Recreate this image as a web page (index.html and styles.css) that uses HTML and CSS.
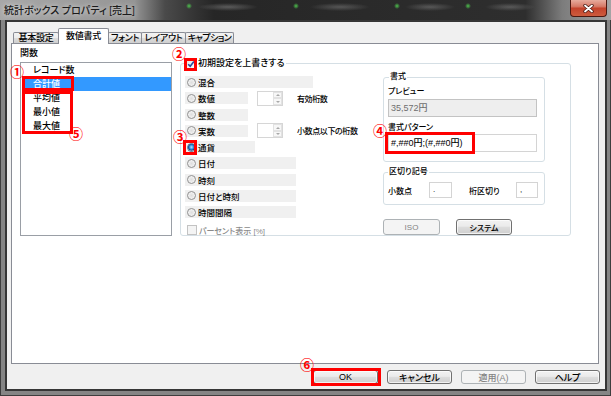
FILE: index.html
```html
<!DOCTYPE html>
<html lang="ja">
<head>
    <meta charset="UTF-8">
    <title>統計ボックス プロパティ</title>
    <link rel="stylesheet" href="styles.css">
</head>
<body>
    <div class="window">
        <!-- タイトルバー -->
        <div class="titlebar">
            <span class="title">統計ボックス プロパティ [売上]</span>
            <span class="close">
                <svg width="11" height="9" viewBox="0 0 11 9">
                    <path d="M2 1.5 L9 7.5 M9 1.5 L2 7.5" stroke="#4a1a14" stroke-width="3.4" stroke-linecap="round"/>
                    <path d="M2 1.5 L9 7.5 M9 1.5 L2 7.5" stroke="#fff" stroke-width="1.8" stroke-linecap="round"/>
                </svg>
            </span>
        </div>

        <div class="client">
            <!-- タブ -->
            <div class="tabs">
                <span class="tab tab-basic">基本設定</span>
                <span class="tab tab-number active">数値書式</span>
                <span class="tab tab-font">フォント</span>
                <span class="tab tab-layout">レイアウト</span>
                <span class="tab tab-caption">キャプション</span>
            </div>

            <div class="panel">
                <!-- 関数リスト -->
                <div class="func-col">
                    <div class="caption">関数</div>
                    <ul class="listbox">
                        <li>レコード数</li>
                        <li class="selected">合計値</li>
                        <li>平均値</li>
                        <li>最小値</li>
                        <li>最大値</li>
                    </ul>
                </div>

                <!-- 初期設定を上書きする -->
                <fieldset class="group main-group">
                    <legend class="check-legend">
                        <span class="legend-inner">
                            <span class="checkbox">
                                <svg width="8" height="8" viewBox="0 0 8 8"><path d="M1.2 4.2 L3.2 6.3 L6.9 1.4" fill="none" stroke="#2b4a9c" stroke-width="1.6"/></svg>
                            </span>
                            初期設定を上書きする
                        </span>
                    </legend>
                    <div class="group-body">
                        <div class="radio-col">
                            <div class="row"><span class="opt opt-wide"><span class="radio"></span>混合</span></div>
                            <div class="row">
                                <span class="opt opt-short"><span class="radio"></span>数値</span>
                                <span class="spin"><span class="spin-field"></span><span class="spin-btns"><span class="up"></span><span class="down"></span></span></span>
                                <span class="note">有効桁数</span>
                            </div>
                            <div class="row"><span class="opt opt-short"><span class="radio"></span>整数</span></div>
                            <div class="row">
                                <span class="opt opt-short"><span class="radio"></span>実数</span>
                                <span class="spin"><span class="spin-field"></span><span class="spin-btns"><span class="up"></span><span class="down"></span></span></span>
                                <span class="note">小数点以下の桁数</span>
                            </div>
                            <div class="row"><span class="opt opt-mid"><span class="radio on"></span>通貨</span></div>
                            <div class="row"><span class="opt opt-long"><span class="radio"></span>日付</span></div>
                            <div class="row"><span class="opt opt-long"><span class="radio"></span>時刻</span></div>
                            <div class="row"><span class="opt opt-long"><span class="radio"></span>日付と時刻</span></div>
                            <div class="row"><span class="opt opt-long"><span class="radio"></span>時間間隔</span></div>
                            <div class="check-row"><span class="checkbox off"></span>パーセント表示 [%]</div>
                        </div>

                        <div class="fmt-col">
                            <fieldset class="group fmt-group">
                                <legend>書式</legend>
                                <div class="field-label">プレビュー</div>
                                <div class="preview">35,572円</div>
                                <div class="field-label pattern-label">書式パターン</div>
                                <div class="pattern">#,##0円;(#,##0円)</div>
                            </fieldset>
                            <fieldset class="group sep-group">
                                <legend>区切り記号</legend>
                                <div class="sep-row">
                                    <span class="sep-label dec-label">小数点</span>
                                    <span class="small-input dec-input">.</span>
                                    <span class="sep-label thou-label">桁区切り</span>
                                    <span class="small-input thou-input">,</span>
                                </div>
                            </fieldset>
                            <div class="fmt-buttons">
                                <span class="btn disabled btn-iso">ISO</span>
                                <span class="btn btn-system">システム</span>
                            </div>
                        </div>
                    </div>
                </fieldset>
            </div>

            <!-- 下部ボタン -->
            <div class="footer">
                <span class="btn foot-btn">OK</span>
                <span class="btn foot-btn">キャンセル</span>
                <span class="btn foot-btn disabled">適用(A)</span>
                <span class="btn foot-btn">ヘルプ</span>
            </div>
        </div>

        <!-- 赤い注釈 -->
        <span class="mark mark-sum"></span>
        <span class="mark mark-others"></span>
        <span class="mark mark-check"></span>
        <span class="mark mark-radio"></span>
        <span class="mark mark-pattern"></span>
        <span class="mark mark-ok"></span>
        <span class="num num-1">①</span>
        <span class="num num-2">②</span>
        <span class="num num-3">③</span>
        <span class="num num-4">④</span>
        <span class="num num-5">⑤</span>
        <span class="num num-6">⑥</span>
    </div>
</body>
</html>
```
FILE: styles.css
```css
* {
    box-sizing: border-box;
}
body {
    margin: 0;
    background: #fff;
    font-family: "Liberation Sans", "Noto Sans CJK JP", sans-serif;
    font-size: 9px;
    font-weight: 500;
    font-feature-settings: "palt";
    color: #000;
}
.window {
    position: relative;
    width: 611px;
    height: 396px;
    display: flex;
    flex-direction: column;
    background: #858585;
    box-shadow: inset 0 0 0 1px #3e3e3e;
    overflow: hidden;
}

/* タイトルバー */
.titlebar {
    height: 20px;
    flex: none;
    display: flex;
    align-items: flex-start;
    padding-left: 4px;
    background:
        radial-gradient(circle at 189px 6px, rgba(80, 210, 80, 0.9) 0, rgba(80, 210, 80, 0) 3px),
        radial-gradient(circle at 296px 6px, rgba(80, 210, 80, 0.9) 0, rgba(80, 210, 80, 0) 3px),
        radial-gradient(circle at 397px 6px, rgba(80, 210, 80, 0.9) 0, rgba(80, 210, 80, 0) 3px),
        radial-gradient(circle at 468px 6px, rgba(80, 210, 80, 0.9) 0, rgba(80, 210, 80, 0) 3px),
        radial-gradient(ellipse 30px 4px at 228px 7px, rgba(190, 190, 190, 0.35), rgba(190, 190, 190, 0)),
        radial-gradient(ellipse 30px 4px at 340px 7px, rgba(190, 190, 190, 0.3), rgba(190, 190, 190, 0)),
        radial-gradient(ellipse 25px 4px at 430px 7px, rgba(190, 190, 190, 0.3), rgba(190, 190, 190, 0)),
        radial-gradient(ellipse 25px 4px at 510px 7px, rgba(190, 190, 190, 0.3), rgba(190, 190, 190, 0)),
        linear-gradient(90deg, #a8a8a8 0, #959595 22%, #4a4a4a 27%, #262626 35%, #2a2a2a 60%, #2e2e2e 86%, #7c7c7c 92%, #a4a4a4 100%);
}
.title {
    font-size: 10px;
    line-height: 22px;
    color: #1b1b1b;
    text-shadow: 0 0 5px rgba(255, 255, 255, 0.8);
}
.close {
    margin-left: auto;
    margin-right: 4px;
    width: 37px;
    height: 17px;
    display: flex;
    align-items: center;
    justify-content: center;
    border: 1px solid #4d1810;
    border-top: none;
    border-radius: 0 0 4px 4px;
    background: linear-gradient(#e7ab9d, #d67a67 40%, #c4432c 52%, #cd5b3d);
}

/* クライアント領域 */
.client {
    flex: 1;
    margin: 0 4px 5px 5px;
    border: 2px solid #363636;
    background: #f0f0f0;
    display: flex;
    flex-direction: column;
}
.tabs {
    flex: none;
    height: 15px;
    margin-top: 6px;
    padding-left: 6px;
    display: flex;
    align-items: flex-end;
}
.tab {
    height: 11px;
    margin-left: -1px;
    border: 1px solid #898c95;
    border-bottom: none;
    border-radius: 2px 2px 0 0;
    background: linear-gradient(#f3f3f3, #ebebeb 50%, #dddddd 50%, #cfcfcf);
    line-height: 10px;
    text-align: center;
    white-space: nowrap;
    letter-spacing: -0.3px;
}
.tab-basic {
    width: 46px;
    margin-left: 0;
}
.tab-number { width: 51px; }
.tab-font { width: 34px; }
.tab-layout { width: 45px; }
.tab-caption {
    width: 49px;
    letter-spacing: -0.6px;
}
.tab.active {
    height: 16px;
    margin-bottom: -1px;
    background: #fff;
    line-height: 14px;
    z-index: 1;
}
.panel {
    flex: none;
    height: 321px;
    margin: 0 6px 0 4px;
    border: 1px solid #898c95;
    background: #fff;
    display: flex;
    align-items: flex-start;
    gap: 8px;
    padding: 3px 0 0 8px;
}

/* 関数リスト */
.caption {
    line-height: 12px;
}
.listbox {
    list-style: none;
    margin: 3px 0 0;
    padding: 0;
    width: 152px;
    height: 174px;
    border: 1px solid #9a9fa6;
}
.listbox li {
    height: 14px;
    line-height: 14px;
    padding-left: 12px;
}
.listbox li.selected {
    margin-left: 1px;
    padding-left: 11px;
    background: #3399ff;
    color: #fff;
}

/* グループボックス */
.group {
    margin: 0;
    padding: 0;
    min-width: 0;
    border: 1px solid #d5dfe5;
    border-radius: 3px;
}
.group legend {
    padding: 0 1px;
    margin-left: 1px;
    line-height: 10px;
}
.main-group {
    width: 391px;
    margin-top: 10px;
    padding: 2px 25px 0 4px;
}
.main-group > .check-legend {
    margin-left: 0;
    padding: 0 2px 0 1px;
    line-height: 13px;
}
.legend-inner {
    display: flex;
    align-items: center;
    gap: 2px;
}
.checkbox {
    width: 10px;
    height: 10px;
    flex: none;
    border: 1px solid #8e8f8f;
    background: linear-gradient(135deg, #e2e2e2, #fdfdfd);
    display: flex;
    align-items: center;
    justify-content: center;
}
.checkbox.off {
    border-color: #c3c3c3;
    background: #f4f4f4;
}
.group-body {
    display: flex;
}
.radio-col {
    width: 198px;
    padding-top: 4px;
    display: flex;
    flex-direction: column;
    gap: 4.25px;
    font-size: 8.5px;
}
.row {
    height: 12px;
    display: flex;
    align-items: center;
}
.opt {
    height: 12px;
    display: flex;
    align-items: center;
    gap: 2px;
    padding-left: 2px;
    background: #f0f0f0;
    flex: none;
}
.opt-wide { width: 128px; }
.opt-short { width: 63px; }
.opt-mid { width: 70px; }
.opt-long { width: 111px; }
.radio {
    width: 9px;
    height: 9px;
    flex: none;
    border-radius: 50%;
    border: 1px solid #8f8f8f;
    background: radial-gradient(circle at 50% 50%, #dedede 0, #eeeeee 55%, #ffffff 100%);
}
.radio.on {
    border-color: #4d6b8a;
    background: radial-gradient(circle at 50% 45%, #bfe6ff 0, #3d98e6 35%, #0d4a92 62%, #dcdcdc 70%, #f6f6f6 100%);
}
.spin {
    width: 26px;
    height: 15px;
    flex: none;
    margin-left: 9px;
    border: 1px solid #d6d6d6;
    display: flex;
}
.spin-field {
    flex: 1;
}
.spin-btns {
    width: 9px;
    display: flex;
    flex-direction: column;
}
.spin-btns span {
    flex: 1;
    border: 1px solid #e2e2e2;
    background: #f7f7f7;
    display: flex;
    align-items: center;
    justify-content: center;
}
.spin-btns .up::before,
.spin-btns .down::before {
    content: "";
    border-left: 2px solid transparent;
    border-right: 2px solid transparent;
}
.spin-btns .up::before {
    border-bottom: 2px solid #a8a8a8;
}
.spin-btns .down::before {
    border-top: 2px solid #a8a8a8;
}
.note {
    margin-left: 14px;
    font-size: 8px;
    letter-spacing: -0.4px;
}
.check-row {
    margin-top: 3px;
    height: 10px;
    display: flex;
    align-items: center;
    gap: 2px;
    padding-left: 2px;
    color: #8a8a8a;
    font-size: 8px;
}

/* 書式 */
.fmt-col {
    width: 162px;
    font-size: 8px;
}
.fmt-group {
    padding: 4px 7px 9px 4px;
}
.field-label {
    line-height: 12px;
}
.pattern-label {
    margin-top: 5px;
}
.preview,
.pattern {
    height: 18px;
    padding-left: 2px;
    line-height: 16px;
    font-size: 9px;
}
.preview {
    margin-top: 1px;
    border: 1px solid #c3c3c3;
    background: #eeeeee;
    color: #6e6e6e;
}
.pattern {
    border: 1px solid #d4d4d4;
    background: #fff;
}
.sep-group {
    margin-top: 5px;
    padding: 5px 6px 6px 4px;
}
.sep-group legend {
    margin-left: 0;
}
.sep-row {
    height: 16px;
    display: flex;
    align-items: center;
}
.sep-label {
    flex: none;
}
.dec-label { width: 41px; }
.thou-label {
    width: 47px;
    margin-left: 17px;
}
.small-input {
    height: 16px;
    flex: none;
    border: 1px solid #d4d4d4;
    background: #fff;
    padding-left: 3px;
    line-height: 14px;
}
.dec-input { width: 23px; }
.thou-input { width: 22px; }
.fmt-buttons {
    margin-top: 14px;
    display: flex;
    gap: 16px;
}

/* ボタン */
.btn {
    display: flex;
    align-items: center;
    justify-content: center;
    border: 1px solid #707070;
    border-radius: 3px;
    background: linear-gradient(#f2f2f2, #ebebeb 45%, #dddddd 50%, #cfcfcf);
    box-shadow: inset 0 0 0 1px rgba(255, 255, 255, 0.7);
}
.btn.disabled {
    border-color: #adb2b5;
    background: #f4f4f4;
    color: #838383;
    box-shadow: none;
}
.btn-iso {
    width: 57px;
    height: 16px;
}
.btn-system {
    width: 56px;
    height: 16px;
}
.footer {
    flex: 1;
    display: flex;
    justify-content: flex-end;
    align-items: flex-start;
    gap: 9px;
    padding: 6px 5px 0 0;
}
.foot-btn {
    width: 65px;
    height: 14px;
}

/* 赤い注釈（画面の上に重ねる） */
.mark {
    position: absolute;
    border: 3px solid #ff0000;
}
.mark-sum { left: 22px; top: 76px; width: 52px; height: 15px; }
.mark-others { left: 22px; top: 91px; width: 51px; height: 43px; }
.mark-check { left: 184px; top: 58px; width: 13px; height: 13px; }
.mark-radio { left: 183px; top: 140px; width: 14px; height: 15px; }
.mark-pattern { left: 385px; top: 132px; width: 90px; height: 22px; }
.mark-ok { left: 311px; top: 368px; width: 70px; height: 18px; }
.num {
    position: absolute;
    width: 14px;
    height: 14px;
    font-family: "Noto Sans CJK JP", sans-serif;
    font-size: 14px;
    font-weight: 700;
    line-height: 14px;
    text-align: center;
    color: #ff0000;
}
.num-1 { left: 10px; top: 64px; }
.num-2 { left: 172px; top: 46px; }
.num-3 { left: 173px; top: 129px; }
.num-4 { left: 373px; top: 123px; }
.num-5 { left: 69px; top: 126px; }
.num-6 { left: 300px; top: 357px; }
```
